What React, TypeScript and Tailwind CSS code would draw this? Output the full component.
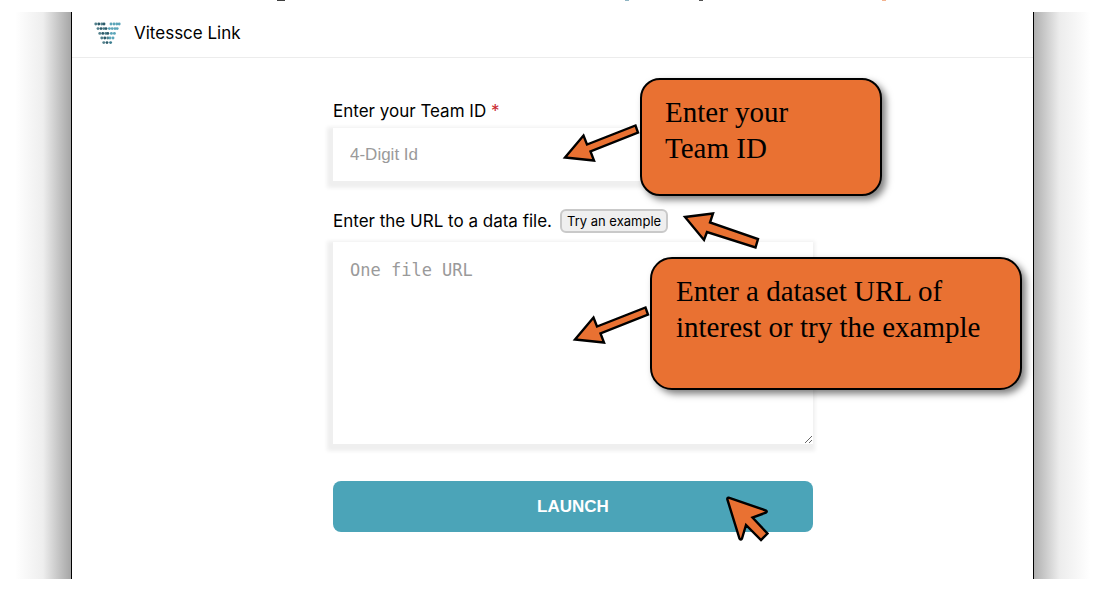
import { useState } from "react";

const logoRows = [
  { y: 2, dots: [1.8, 4.8, 7.8, 10, 17, 20, 22.8, 25.2] },
  { y: 6.6, dots: [4, 7, 9.8, 12, 15.4, 18.2, 21, 23.2] },
  { y: 11.4, dots: [5.8, 8.8, 11.8, 13.8, 17.4, 20.4] },
  { y: 16, dots: [7.8, 10.8, 13.8, 16, 19] },
  { y: 20.6, dots: [9.8, 13, 16.6] },
];

function Logo() {
  return (
    <svg viewBox="0 0 27 23" className="h-[23px] w-[27px]" aria-hidden="true">
      {logoRows.map((row, r) =>
        row.dots.map((x, i) => (
          <circle
            key={`${r}-${i}`}
            cx={x}
            cy={row.y}
            r={1.45}
            fill={x > 14.5 ? (r > 3 ? "#3b7d8f" : "#5ba5b9") : i % 2 === 0 ? "#53808c" : "#2b5a69"}
          />
        )),
      )}
    </svg>
  );
}

function Arrow({ points, className }: { points: string; className: string }) {
  return (
    <svg
      viewBox="0 0 80 42"
      className={`absolute h-[42px] w-20 overflow-visible ${className}`}
      aria-hidden="true"
    >
      <polygon points={points} fill="#e97132" stroke="#000" strokeWidth="2.4" />
    </svg>
  );
}

const downLeft = "4,30.5 22.5,8.5 26,17.5 74.5,-1.5 77,5.5 29.5,24.5 33,33.5";

export default function App() {
  const [team, setTeam] = useState("");
  const [url, setUrl] = useState("");

  return (
    <div className="bg-white pr-[27px] pb-7 pl-[15px] font-[Inter,'Liberation_Sans',sans-serif] text-[17px] text-black">
      <div className="flex h-3 items-start pl-[262px]" aria-hidden="true">
        <span className="h-px w-2 bg-neutral-700" />
        <span className="ml-[340px] h-px w-1 bg-[#8fb5c3]" />
        <span className="ml-[70px] h-px w-1 bg-neutral-600" />
        <span className="ml-[179px] h-px w-1 bg-[#f3b38f]" />
      </div>
      <div className="flex">
        <div className="w-14 bg-linear-to-r from-white from-0% via-[#eeeeee] via-50% to-[#a6a6a6]" />
        <main className="min-w-0 flex-1 border-x border-black">
          <header className="flex h-[46px] items-center gap-[13px] border-b border-[#ececec] pb-0.5 pl-[22px]">
            <Logo />
            <h1>Vitessce Link</h1>
          </header>
          <form
            className="pt-10 pb-[47px] pl-[41px]"
            onSubmit={(event) => event.preventDefault()}
          >
            <div className="relative mx-auto w-[480px]">
              <label htmlFor="team" className="block pt-px leading-6">
                Enter your Team ID <span className="text-[#c9252d]">*</span>
              </label>
              <input
                id="team"
                value={team}
                onChange={(event) => setTeam(event.target.value)}
                placeholder="4-Digit Id"
                className="mt-[5px] block h-[53px] w-full bg-white px-[17px] font-['Liberation_Sans',sans-serif] shadow-[-2px_3px_4px_4px_#efefef] placeholder:text-[#9a9a9a]"
              />
              <div className="mt-7 flex h-6 items-center gap-2">
                <label htmlFor="url" className="pt-px">
                  Enter the URL to a data file.
                </label>
                <button
                  type="button"
                  onClick={() => setUrl("https://example.com/data.zarr")}
                  className="h-6 rounded-md border-2 border-[#c9c9c9] bg-[#efefef] px-[5px] text-[13px] leading-5 whitespace-nowrap"
                >
                  Try an example
                </button>
              </div>
              <textarea
                id="url"
                value={url}
                onChange={(event) => setUrl(event.target.value)}
                placeholder="One file URL"
                className="mt-[9px] block h-[202px] w-full resize bg-white px-[17px] py-4 font-['DejaVu_Sans_Mono',monospace] leading-6 shadow-[-2px_3px_4px_4px_#efefef] placeholder:text-[#9a9a9a]"
              />
              <button
                type="submit"
                className="mt-[37px] block h-[51px] w-full rounded-lg bg-[#4ba4b8] font-['Liberation_Sans',sans-serif] font-bold text-white"
              >
                LAUNCH
              </button>

              <p className="absolute top-[-20px] left-[307px] w-[242px] rounded-[20px] border-2 border-black bg-[#e97132] pt-3.5 pr-16 pb-7 pl-[23px] font-['Liberation_Serif',serif] text-[29px] leading-9 shadow-[4px_4px_7px_rgba(0,0,0,0.5)]">
                Enter your Team ID
              </p>
              <p className="absolute top-[159px] left-[317px] w-[372px] rounded-[22px] border-2 border-black bg-[#e97132] pt-3.5 pr-8 pb-[43px] pl-6 font-['Liberation_Serif',serif] text-[29px] leading-9 shadow-[4px_4px_7px_rgba(0,0,0,0.5)]">
                Enter a dataset URL of interest or try the example
              </p>

              <Arrow className="top-[29px] left-[228px]" points={downLeft} />
              <Arrow className="top-[211px] left-[238px]" points={downLeft} />
              <Arrow
                className="top-[113px] left-[350px]"
                points="2,6 30,2.5 27,11.5 75,28 72.5,36.5 24,21 21,29"
              />
              <svg
                viewBox="0 0 46 48"
                className="absolute top-[396px] left-[391px] h-12 w-[46px]"
                aria-hidden="true"
              >
                <path
                  d="M4.6 3.7 L42 16.5 Q43.6 17.6 41.8 18.7 L28.5 23.5 L43.5 39.5 L37 46 L22 31 L18 44.5 Q16.6 46.6 15.4 44.4 L3.3 5.2 Q3.2 3.4 4.6 3.7 Z"
                  fill="#e97132"
                  stroke="#000"
                  strokeWidth="2.4"
                />
              </svg>
            </div>
          </form>
        </main>
        <div className="w-14 bg-linear-to-r from-[#b0b0b0] via-[#ececec] via-45% to-white" />
      </div>
    </div>
  );
}
